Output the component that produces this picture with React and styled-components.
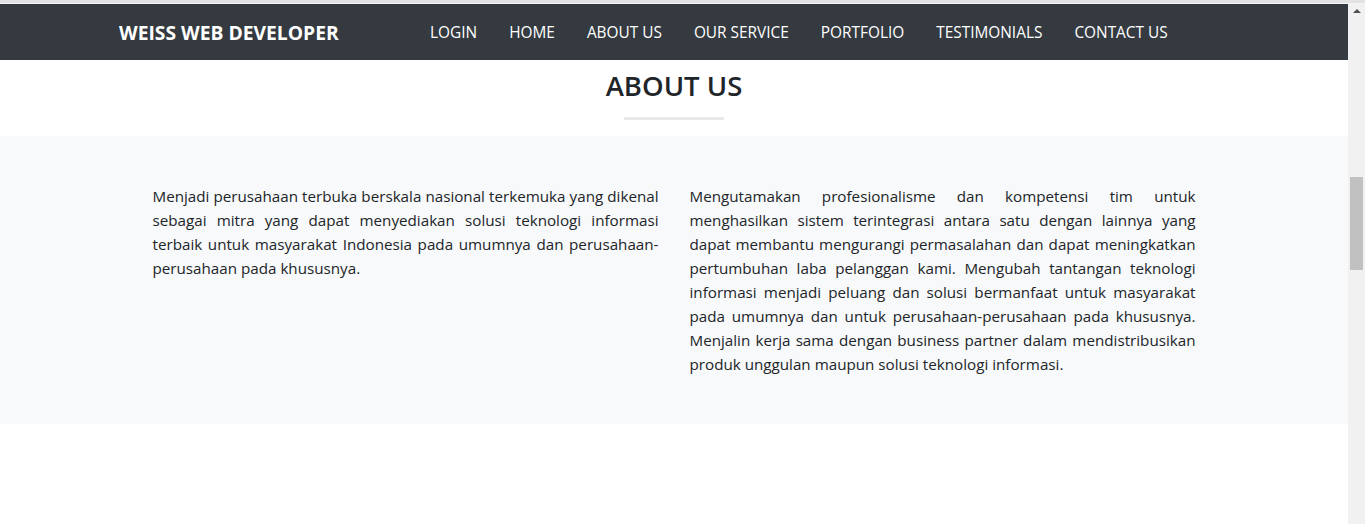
import React from 'react'
import styled, { createGlobalStyle } from 'styled-components'

const GlobalStyle = createGlobalStyle`
    html, body {
        margin: 0;
        padding: 0;
        background: #ffffff;
        overflow: hidden;
    }
    body {
        font-family: 'Open Sans', 'Noto Sans', sans-serif;
        color: #212529;
    }
    * {
        box-sizing: border-box;
    }
`

const TopEdge = styled.div`
    height: 4px;
    background: #e2e2e2;
    border-bottom: 1px solid #f4f4f4;
`

const Window = styled.div`
    display: flex;
    height: 520px;
`

const Page = styled.div`
    flex: 1;
    min-width: 0;
    background: #ffffff;
`

const Scrollbar = styled.div`
    width: 17px;
    background: #f1f1f1;
    display: flex;
    flex-direction: column;
    align-items: center;
`

const ScrollArrow = styled.div`
    width: 0;
    height: 0;
    margin-top: 5px;
    border-left: 4px solid transparent;
    border-right: 4px solid transparent;
    border-bottom: 4px solid #505050;
`

const ScrollThumb = styled.div`
    width: 13px;
    height: 93px;
    margin-top: 164px;
    background: #c1c1c1;
`

const Navbar = styled.nav`
    height: 56px;
    background: #343a40;
    display: flex;
    align-items: center;
`

const Container = styled.div`
    width: 100%;
    max-width: 1140px;
    margin: 0 auto;
    padding: 0 15px;
    display: flex;
    align-items: center;
`

const Brand = styled.a`
    font-size: 19.3px;
    font-weight: 700;
    color: #ffffff;
    text-decoration: none;
    margin-right: 30px;
    white-space: nowrap;
`

const NavList = styled.ul`
    list-style: none;
    display: flex;
    margin: 0 auto;
    padding: 0;
`

const NavItem = styled.li`
    padding: 0 16px;
    font-size: 15.4px;
    color: #ffffff;
    white-space: nowrap;
`

const TitleBlock = styled.section`
    padding: 8px 0 16px;
    display: flex;
    flex-direction: column;
    align-items: center;
`

const Title = styled.h2`
    margin: 0;
    font-size: 27.5px;
    line-height: 35px;
    font-weight: 600;
    color: #212529;
`

const Divider = styled.div`
    width: 100px;
    height: 3px;
    margin-top: 14px;
    background: #e9e9e9;
`

const AboutBlock = styled.section`
    background: #f8f9fa;
    padding: 48px 0;
`

const Columns = styled.div`
    display: grid;
    grid-template-columns: 506px 506px;
    column-gap: 31px;
    justify-content: center;
`

const Text = styled.p`
    margin: 0;
    font-size: 15.2px;
    line-height: 24px;
    text-align: justify;
    color: #212529;
`

const links = ['LOGIN', 'HOME', 'ABOUT US', 'OUR SERVICE', 'PORTFOLIO', 'TESTIMONIALS', 'CONTACT US']

export default function App() {
    return (
        <>
            <GlobalStyle />
            <TopEdge />
            <Window>
                <Page>
                    <Navbar>
                        <Container>
                            <Brand>WEISS WEB DEVELOPER</Brand>
                            <NavList>
                                {links.map(l => (
                                    <NavItem key={l}>{l}</NavItem>
                                ))}
                            </NavList>
                        </Container>
                    </Navbar>
                    <TitleBlock>
                        <Title>ABOUT US</Title>
                        <Divider />
                    </TitleBlock>
                    <AboutBlock>
                        <Columns>
                            <Text>
                                Menjadi perusahaan terbuka berskala nasional terkemuka yang dikenal sebagai mitra yang
                                dapat menyediakan solusi teknologi informasi terbaik untuk masyarakat Indonesia pada
                                umumnya dan perusahaan-perusahaan pada khususnya.
                            </Text>
                            <Text>
                                Mengutamakan profesionalisme dan kompetensi tim untuk menghasilkan sistem terintegrasi
                                antara satu dengan lainnya yang dapat membantu mengurangi permasalahan dan dapat
                                meningkatkan pertumbuhan laba pelanggan kami. Mengubah tantangan teknologi informasi
                                menjadi peluang dan solusi bermanfaat untuk masyarakat pada umumnya dan untuk
                                perusahaan-perusahaan pada khususnya. Menjalin kerja sama dengan business partner
                                dalam mendistribusikan produk unggulan maupun solusi teknologi informasi.
                            </Text>
                        </Columns>
                    </AboutBlock>
                </Page>
                <Scrollbar>
                    <ScrollArrow />
                    <ScrollThumb />
                </Scrollbar>
            </Window>
        </>
    )
}
